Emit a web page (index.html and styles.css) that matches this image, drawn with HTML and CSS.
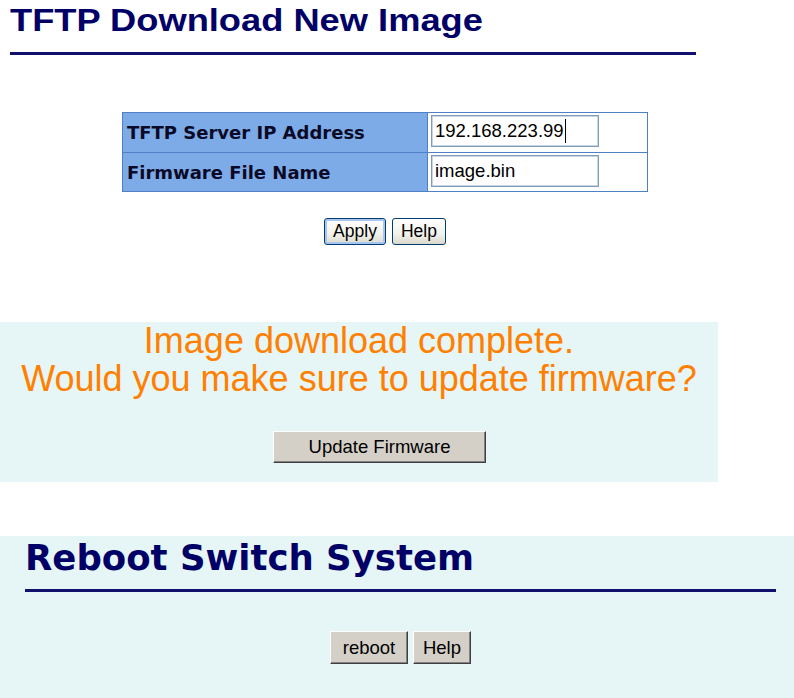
FILE: index.html
```html
<!DOCTYPE html>
<html lang="en">
<head>
    <meta charset="UTF-8">
    <title>Firmware Upgrade</title>
    <link rel="stylesheet" href="styles.css">
</head>
<body>
    <!-- TFTP download form -->
    <section class="tftp">
        <h1 class="page-title"><span class="title-text">TFTP Download New Image</span></h1>
        <div class="title-rule"></div>

        <div class="form-wrap">
            <div class="form-grid">
                <div class="label-cell">TFTP Server IP Address</div>
                <div class="field-cell">
                    <span class="field">
                        <input type="text" class="text-input" value="192.168.223.99">
                        <span class="caret"></span>
                    </span>
                </div>
                <div class="label-cell">Firmware File Name</div>
                <div class="field-cell">
                    <input type="text" class="text-input" value="image.bin">
                </div>
            </div>
            <div class="button-row">
                <button class="xp-button default">Apply</button>
                <button class="xp-button">Help</button>
            </div>
        </div>
    </section>

    <!-- Download result -->
    <section class="notice">
        <p class="notice-text">Image download complete.<br>Would you make sure to update firmware?</p>
        <div class="notice-actions">
            <button class="classic-button update">Update Firmware</button>
        </div>
    </section>

    <!-- Reboot -->
    <section class="reboot">
        <h2 class="reboot-title">Reboot Switch System</h2>
        <div class="reboot-rule"></div>
        <div class="reboot-actions">
            <button class="classic-button reboot-btn">reboot</button>
            <button class="classic-button help-btn">Help</button>
        </div>
    </section>
</body>
</html>
```

FILE: styles.css
```css
body { margin: 0; font-family: "Liberation Sans", Arial, sans-serif; background: #fff; color: #000; }

.page-title { margin: 0; padding: 3px 0 0 10px; font: bold 31px/36px "Liberation Sans", Arial, sans-serif; color: #000066; }
.title-text { display: inline-block; transform: scaleX(1.17); transform-origin: left center; }
.title-rule { margin: 13px 0 0 10px; width: 686px; height: 3px; background: #10106e; }

.form-wrap { margin: 57px 0 0 122px; width: 526px; }
.form-grid { display: grid; grid-template-columns: 305px 220px; grid-template-rows: 40px 39px; border-top: 1px solid #4f80c6; border-left: 1px solid #4f80c6; }
.label-cell, .field-cell { box-sizing: border-box; border-right: 1px solid #4f80c6; border-bottom: 1px solid #4f80c6; }
.label-cell { display: flex; align-items: center; padding-left: 4px; background: #7dabe8; font: bold 18px/21px "DejaVu Sans", Verdana, sans-serif; color: #0a0a26; }
.field-cell { padding: 2px 0 0 3px; background: #fff; }
.field { position: relative; display: inline-block; }
.text-input { box-sizing: border-box; width: 168px; height: 32px; margin: 0; padding: 0 0 0 3px; border: 1px solid #7f9db9; box-shadow: inset 0 0 0 1px #c9d5e2; font: 18.5px "Liberation Sans", Arial, sans-serif; color: #000; outline: none; }
.caret { position: absolute; left: 134px; top: 4px; width: 1px; height: 24px; background: #000; }

.button-row { display: flex; justify-content: center; gap: 6px; margin-top: 26px; }
.xp-button { height: 27px; padding: 0 8px; border: 1px solid #003c74; border-radius: 3px; background: linear-gradient(#ffffff, #f2f1ea 60%, #dcd9cc); font: 17.5px "Liberation Sans", Arial, sans-serif; color: #000; }
.xp-button.default { box-shadow: inset 0 0 0 2px #a9c6f1; }

.notice { box-sizing: border-box; width: 718px; height: 160px; margin-top: 77px; background: #e6f5f5; text-align: center; }
.notice-text { margin: 0; font: 36px/38px "Liberation Sans", Arial, sans-serif; color: #ff8000; }
.notice-actions { display: flex; justify-content: center; padding-left: 41px; margin-top: 33px; }

.classic-button { box-sizing: border-box; height: 33px; padding: 0; background: #d4d0c8; border: 1px solid; border-color: #ffffff #404040 #404040 #ffffff; box-shadow: inset -1px -1px 0 #808080; font: 18.5px "Liberation Sans", Arial, sans-serif; color: #000; }
.classic-button.update { width: 213px; height: 32px; }
.reboot-btn { width: 78px; }
.help-btn { width: 58px; }

.reboot { box-sizing: border-box; height: 163px; margin-top: 54px; padding: 2px 18px 0 25px; background: #e6f5f5; }
.reboot-title { margin: 0; font: bold 35.5px/40px "DejaVu Sans", Verdana, sans-serif; color: #000066; }
.reboot-rule { margin-top: 11px; height: 3px; background: #10106e; }
.reboot-actions { display: flex; justify-content: center; gap: 5px; margin-top: 39px; }
```
